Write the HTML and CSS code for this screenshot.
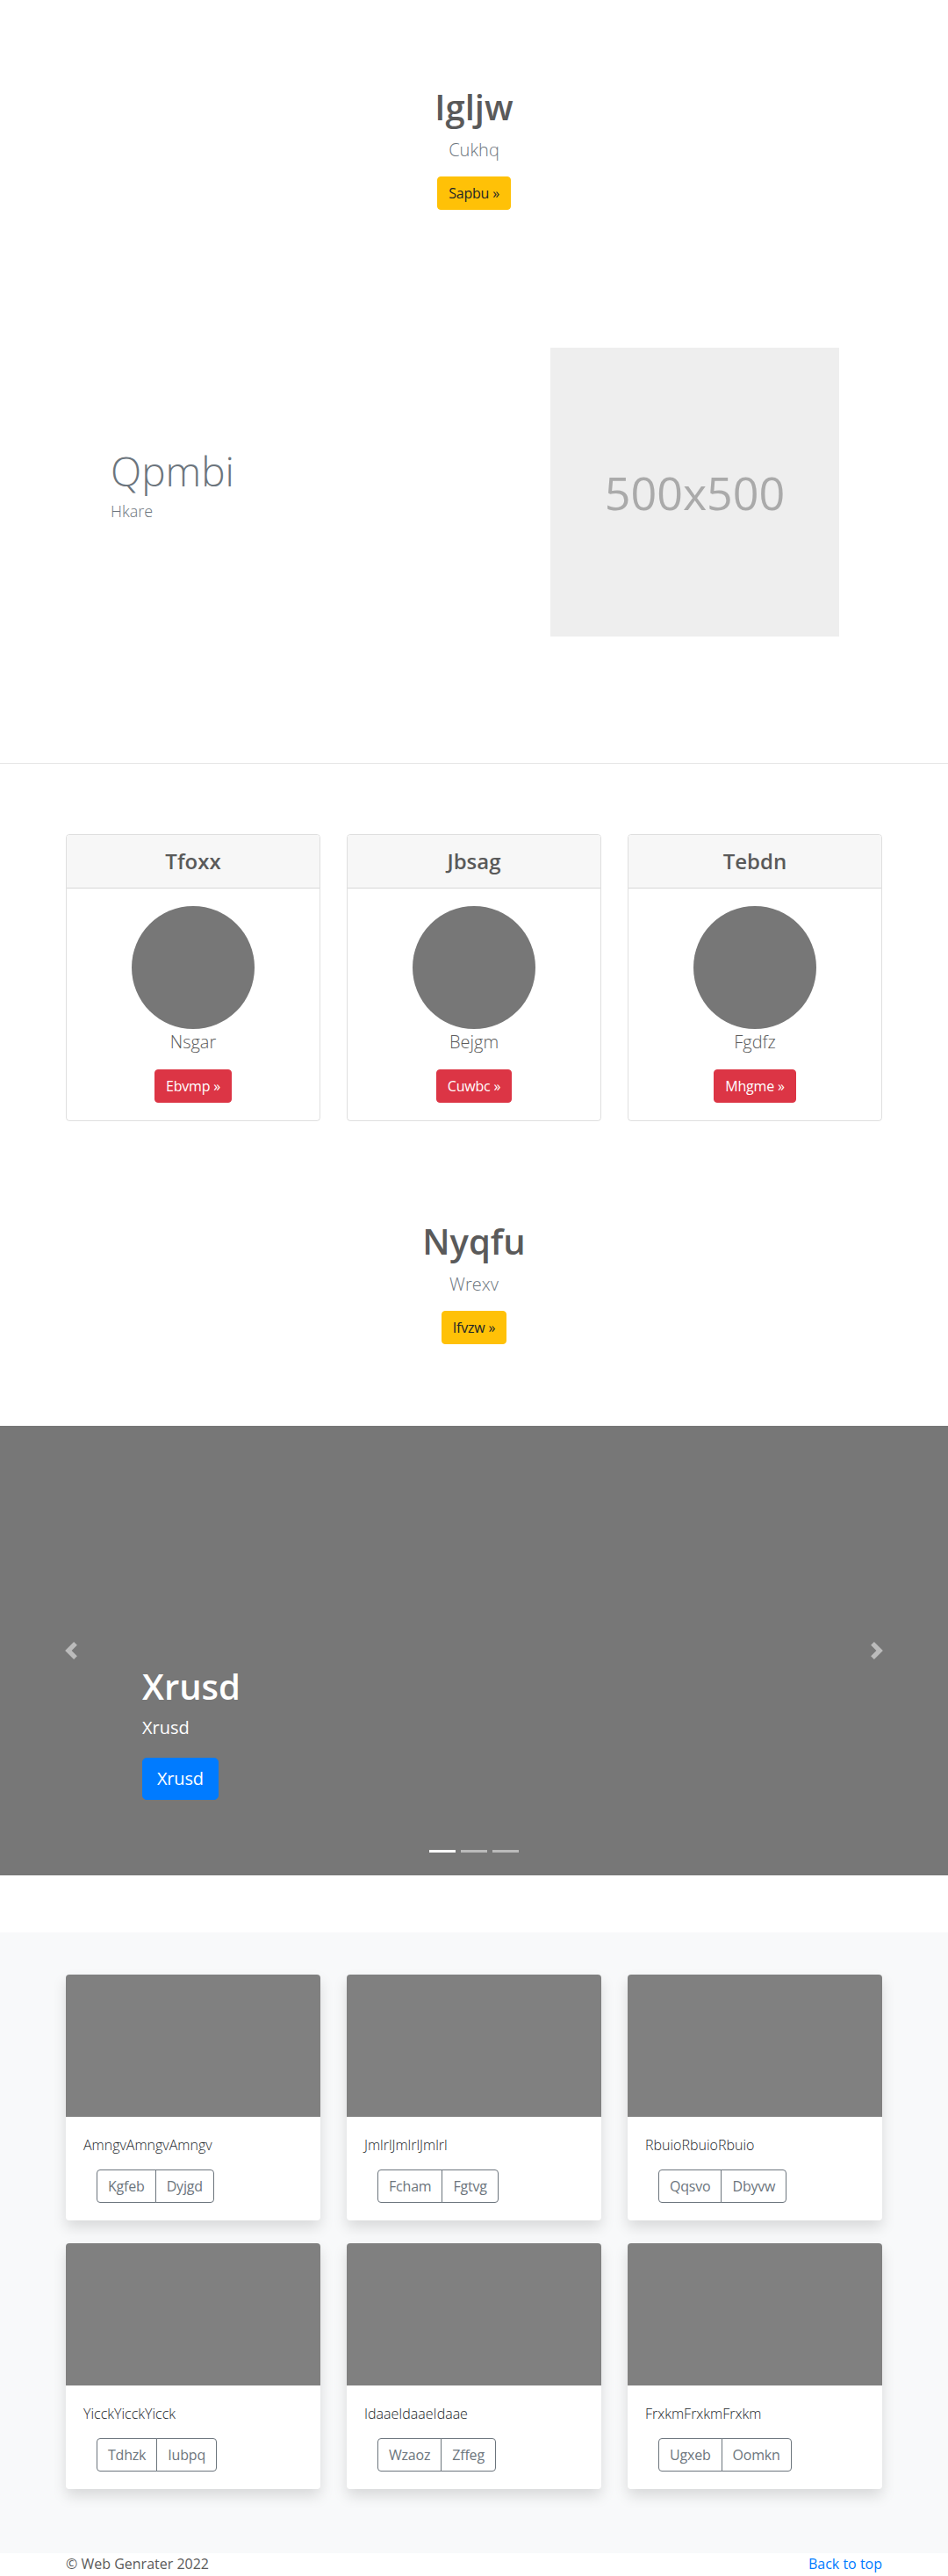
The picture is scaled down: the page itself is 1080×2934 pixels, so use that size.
FILE: index.html
```html
<!DOCTYPE html>
<html lang="en">
<head>
<meta charset="utf-8">
<title>Page</title>
<link rel="stylesheet" href="styles.css">
</head>
<body>
<section class="hero hero-top">
  <h1 class="hero-title">Igljw</h1>
  <p class="lead">Cukhq</p>
  <a class="btn btn-warning" href="#">Sapbu &raquo;</a>
</section>

<section class="featurette">
  <div class="featurette-text">
    <h2 class="featurette-heading">Qpmbi</h2>
    <p class="featurette-sub">Hkare</p>
  </div>
  <div class="placeholder">500x500</div>
</section>

<section class="pricing">
  <div class="pricing-grid">
    <div class="pcard">
      <div class="pcard-header"><h4>Tfoxx</h4></div>
      <div class="pcard-body">
        <div class="circle"></div>
        <p class="pname">Nsgar</p>
        <a class="btn btn-danger" href="#">Ebvmp &raquo;</a>
      </div>
    </div>
    <div class="pcard">
      <div class="pcard-header"><h4>Jbsag</h4></div>
      <div class="pcard-body">
        <div class="circle"></div>
        <p class="pname">Bejgm</p>
        <a class="btn btn-danger" href="#">Cuwbc &raquo;</a>
      </div>
    </div>
    <div class="pcard">
      <div class="pcard-header"><h4>Tebdn</h4></div>
      <div class="pcard-body">
        <div class="circle"></div>
        <p class="pname">Fgdfz</p>
        <a class="btn btn-danger" href="#">Mhgme &raquo;</a>
      </div>
    </div>
  </div>
</section>

<section class="hero hero-mid">
  <h1 class="hero-title">Nyqfu</h1>
  <p class="lead">Wrexv</p>
  <a class="btn btn-warning" href="#">Ifvzw &raquo;</a>
</section>

<section class="carousel">
  <a class="carousel-control prev" href="#">
    <svg width="20" height="20" viewBox="0 0 8 8"><path fill="#fff" d="M5.25 0l-4 4 4 4 1.5-1.5L4.25 4l2.5-2.5L5.25 0z"/></svg>
  </a>
  <a class="carousel-control next" href="#">
    <svg width="20" height="20" viewBox="0 0 8 8"><path fill="#fff" d="M2.75 0l-1.5 1.5L3.75 4l-2.5 2.5L2.75 8l4-4-4-4z"/></svg>
  </a>
  <div class="carousel-caption">
    <h1>Xrusd</h1>
    <p class="cap-sub">Xrusd</p>
    <div class="cap-btn"><a class="btn btn-lg btn-primary" href="#">Xrusd</a></div>
  </div>
  <ol class="indicators">
    <li class="active"></li>
    <li></li>
    <li></li>
  </ol>
</section>

<section class="album">
  <div class="album-grid">
    <div class="acard">
      <div class="acard-img"></div>
      <div class="acard-body">
        <p class="acard-text">AmngvAmngvAmngv</p>
        <div class="btn-group"><a class="btn btn-outline" href="#">Kgfeb</a><a class="btn btn-outline" href="#">Dyjgd</a></div>
      </div>
    </div>
    <div class="acard">
      <div class="acard-img"></div>
      <div class="acard-body">
        <p class="acard-text">JmlrlJmlrlJmlrl</p>
        <div class="btn-group"><a class="btn btn-outline" href="#">Fcham</a><a class="btn btn-outline" href="#">Fgtvg</a></div>
      </div>
    </div>
    <div class="acard">
      <div class="acard-img"></div>
      <div class="acard-body">
        <p class="acard-text">RbuioRbuioRbuio</p>
        <div class="btn-group"><a class="btn btn-outline" href="#">Qqsvo</a><a class="btn btn-outline" href="#">Dbyvw</a></div>
      </div>
    </div>
    <div class="acard">
      <div class="acard-img"></div>
      <div class="acard-body">
        <p class="acard-text">YicckYicckYicck</p>
        <div class="btn-group"><a class="btn btn-outline" href="#">Tdhzk</a><a class="btn btn-outline" href="#">Iubpq</a></div>
      </div>
    </div>
    <div class="acard">
      <div class="acard-img"></div>
      <div class="acard-body">
        <p class="acard-text">IdaaeIdaaeIdaae</p>
        <div class="btn-group"><a class="btn btn-outline" href="#">Wzaoz</a><a class="btn btn-outline" href="#">Zffeg</a></div>
      </div>
    </div>
    <div class="acard">
      <div class="acard-img"></div>
      <div class="acard-body">
        <p class="acard-text">FrxkmFrxkmFrxkm</p>
        <div class="btn-group"><a class="btn btn-outline" href="#">Ugxeb</a><a class="btn btn-outline" href="#">Oomkn</a></div>
      </div>
    </div>
  </div>
</section>

<footer class="footer">
  <p class="copy">&copy; Web Genrater 2022</p>
  <a class="back" href="#">Back to top</a>
</footer>
</body>
</html>
```

FILE: styles.css
```css
* { box-sizing: border-box; }

body {
  margin: 0;
  font-family: "Open Sans", "Noto Sans", sans-serif;
  font-size: 16px;
  line-height: 1.5;
  color: #5a5a5a;
  background: #fff;
}

a { text-decoration: none; }

.btn {
  display: inline-block;
  font-size: 16px;
  line-height: 24px;
  padding: 6px 12px;
  border: 1px solid transparent;
  border-radius: 4px;
  font-weight: 400;
  text-align: center;
  letter-spacing: -0.2px;
}
.btn-warning { background: #ffc107; border-color: #ffc107; color: #212529; }
.btn-danger { background: #dc3545; border-color: #dc3545; color: #fff; }
.btn-primary { background: #007bff; border-color: #007bff; color: #fff; }
.btn-lg { font-size: 20px; line-height: 30px; padding: 8px 16px; border-radius: 5px; }
.btn-outline { background: transparent; border-color: #6c757d; color: #6c757d; }

/* hero */
.hero { text-align: center; }
.hero-top { padding-top: 98px; }
.hero-mid { padding-top: 113px; }
.hero-title {
  margin: 0 0 10px;
  font-size: 40px;
  line-height: 48px;
  font-weight: 600;
}
.lead {
  margin: 0 0 15px;
  font-size: 20px;
  line-height: 30px;
  font-weight: 300;
  color: #6c757d;
}

/* featurette */
.featurette {
  width: 960px;
  margin: 0 auto;
  padding: 157px 64px 144px 66px;
  display: flex;
  justify-content: space-between;
  align-items: center;
}
.featurette-heading {
  margin: 0 0 6px;
  font-size: 46px;
  line-height: 54px;
  font-weight: 300;
  color: #6c757d;
}
.featurette-sub {
  margin: 0 0 16px;
  font-size: 18px;
  line-height: 27px;
  font-weight: 300;
  color: #6c757d;
}
.placeholder {
  width: 329px;
  height: 329px;
  background: #eee;
  color: #aaa;
  font-size: 52px;
  font-weight: 400;
  display: flex;
  align-items: center;
  justify-content: center;
}

/* pricing */
.pricing {
  border-top: 1px solid #e6e6e6;
  padding-top: 80px;
}
.pricing-grid {
  width: 930px;
  margin: 0 auto;
  display: grid;
  grid-template-columns: repeat(3, 290px);
  column-gap: 30px;
}
.pcard {
  border: 1px solid rgba(0,0,0,.125);
  border-radius: 4px;
  text-align: center;
  overflow: hidden;
}
.pcard-header {
  background: #f7f7f7;
  border-bottom: 1px solid rgba(0,0,0,.125);
  padding: 12px 20px;
}
.pcard-header h4 {
  margin: 0;
  font-size: 24px;
  line-height: 36px;
  font-weight: 600;
}
.pcard-body { padding: 20px; }
.circle {
  width: 140px;
  height: 140px;
  border-radius: 50%;
  background: #777;
  margin: 0 auto;
}
.pname {
  margin: 0 0 16px;
  font-size: 20px;
  line-height: 30px;
  font-weight: 300;
}

/* carousel */
.carousel {
  position: relative;
  height: 512px;
  margin-top: 93px;
  background: #777;
  overflow: hidden;
}
.carousel-control {
  position: absolute;
  top: 0;
  bottom: 0;
  width: 15%;
  display: flex;
  align-items: center;
  justify-content: center;
  opacity: .5;
}
.carousel-control.prev { left: 0; }
.carousel-control.next { right: 0; }
.carousel-caption {
  position: absolute;
  left: 15%;
  right: 15%;
  bottom: 48px;
  padding: 20px 0;
  color: #fff;
  text-align: left;
}
.carousel-caption h1 {
  margin: 0 0 8px;
  font-size: 40px;
  line-height: 48px;
  font-weight: 600;
}
.cap-sub {
  margin: 0 0 19px;
  font-size: 20px;
  line-height: 30px;
}
.cap-btn { margin-bottom: 18px; }
.indicators {
  position: absolute;
  left: 0;
  right: 0;
  bottom: 0;
  margin: 0 0 16px;
  padding: 0;
  list-style: none;
  display: flex;
  justify-content: center;
}
.indicators li {
  width: 30px;
  height: 3px;
  margin: 0 3px;
  background: #fff;
  opacity: .5;
  box-sizing: content-box;
  border-top: 10px solid transparent;
  border-bottom: 10px solid transparent;
  background-clip: padding-box;
}
.indicators li.active { opacity: 1; }

/* album */
.album {
  margin-top: 65px;
  background: #f8f9fa;
  padding: 48px 0 73px;
}
.album-grid {
  width: 930px;
  margin: 0 auto;
  display: grid;
  grid-template-columns: repeat(3, 290px);
  column-gap: 30px;
  row-gap: 26px;
}
.acard {
  background: #fff;
  border-radius: 4px;
  overflow: hidden;
  box-shadow: 0 8px 16px rgba(0,0,0,.13);
}
.acard-img {
  height: 162px;
  background: #808080;
}
.acard-body { padding: 20px; }
.acard-text {
  margin: 0 0 16px;
  font-size: 16px;
  line-height: 24px;
  color: #212529;
  font-weight: 300;
}
.btn-group {
  display: inline-flex;
  margin-left: 15px;
}
.btn-group .btn:first-child { border-top-right-radius: 0; border-bottom-right-radius: 0; }
.btn-group .btn:last-child { border-top-left-radius: 0; border-bottom-left-radius: 0; margin-left: -1px; }

/* footer */
.footer {
  width: 930px;
  margin: 0 auto;
  display: flex;
  justify-content: space-between;
  line-height: 24px;
}
.copy { margin: 0; }
.back { color: #007bff; }
```
